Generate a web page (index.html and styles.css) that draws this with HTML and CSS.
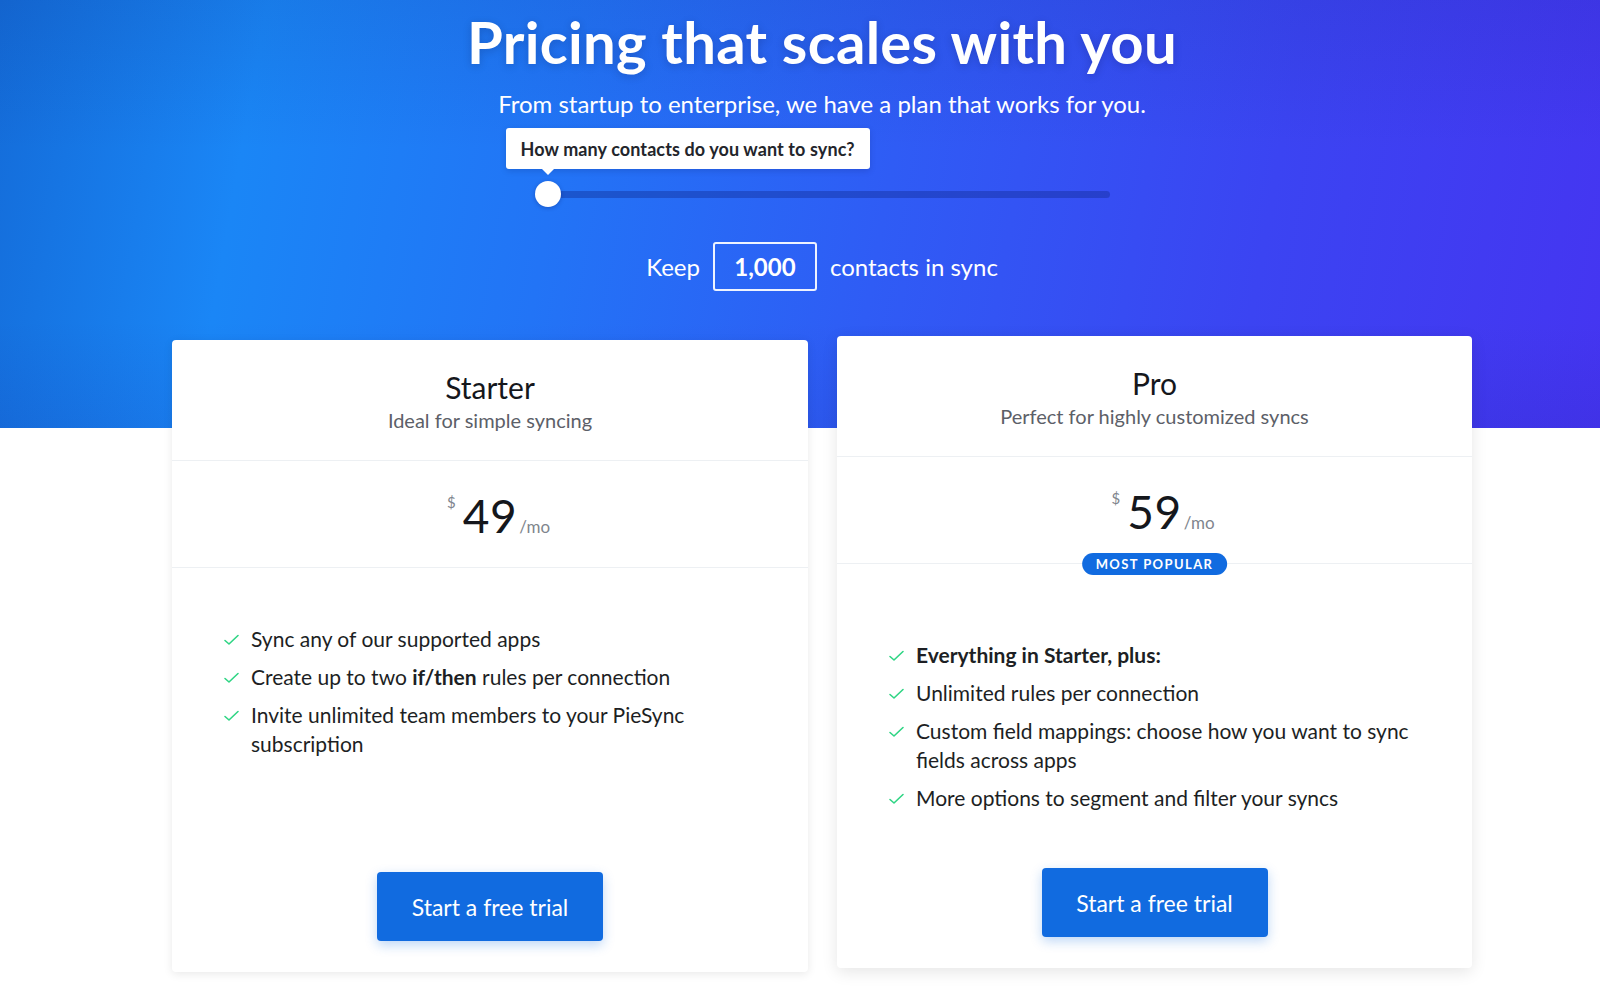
FILE: index.html
```html
<!DOCTYPE html>
<html lang="en">
<head>
<meta charset="utf-8">
<title>Pricing that scales with you</title>
<link rel="stylesheet" href="styles.css">
</head>
<body>
<section class="hero">
  <div class="container hero-inner">
    <h1 class="hero-title">Pricing that scales with you</h1>
    <p class="hero-sub">From startup to enterprise, we have a plan that works for you.</p>
    <div class="slider">
      <div class="track"></div>
      <div class="thumb">
        <div class="tooltip">How many contacts do you want to sync?</div>
      </div>
    </div>
    <div class="keep-row">
      <span>Keep</span>
      <span class="count-box">1,000</span>
      <span>contacts in sync</span>
    </div>
  </div>
</section>

<section class="container plans">
  <div class="card">
    <div class="card-head">
      <h2 class="plan-name">Starter</h2>
      <p class="plan-desc">Ideal for simple syncing</p>
    </div>
    <div class="card-price">
      <div class="price">
        <span class="currency">$</span>
        <span class="amount">49</span>
        <span class="period">/mo</span>
      </div>
    </div>
    <ul class="features">
      <li><svg class="check" viewBox="0 0 16 12"><polyline points="1.5,6.5 5.5,10 14.5,1.5"/></svg><span>Sync any of our supported apps</span></li>
      <li><svg class="check" viewBox="0 0 16 12"><polyline points="1.5,6.5 5.5,10 14.5,1.5"/></svg><span>Create up to two <b>if/then</b> rules per connection</span></li>
      <li><svg class="check" viewBox="0 0 16 12"><polyline points="1.5,6.5 5.5,10 14.5,1.5"/></svg><span>Invite unlimited team members to your PieSync subscription</span></li>
    </ul>
    <div class="card-foot">
      <a class="btn" href="#">Start a free trial</a>
    </div>
  </div>

  <div class="card card-pro">
    <div class="card-head">
      <h2 class="plan-name">Pro</h2>
      <p class="plan-desc">Perfect for highly customized syncs</p>
    </div>
    <div class="card-price">
      <div class="price">
        <span class="currency">$</span>
        <span class="amount">59</span>
        <span class="period">/mo</span>
      </div>
      <span class="badge">MOST POPULAR</span>
    </div>
    <ul class="features features-pro">
      <li><svg class="check" viewBox="0 0 16 12"><polyline points="1.5,6.5 5.5,10 14.5,1.5"/></svg><span><b>Everything in Starter, plus:</b></span></li>
      <li><svg class="check" viewBox="0 0 16 12"><polyline points="1.5,6.5 5.5,10 14.5,1.5"/></svg><span>Unlimited rules per connection</span></li>
      <li><svg class="check" viewBox="0 0 16 12"><polyline points="1.5,6.5 5.5,10 14.5,1.5"/></svg><span>Custom field mappings: choose how you want to sync fields across apps</span></li>
      <li><svg class="check" viewBox="0 0 16 12"><polyline points="1.5,6.5 5.5,10 14.5,1.5"/></svg><span>More options to segment and filter your syncs</span></li>
    </ul>
    <div class="card-foot">
      <a class="btn" href="#">Start a free trial</a>
    </div>
  </div>
</section>
</body>
</html>
```

FILE: styles.css
```css
* { box-sizing: border-box; }

html, body {
  margin: 0;
  padding: 0;
  background: #ffffff;
}

body {
  font-family: Lato, "Open Sans", "Liberation Sans", sans-serif;
  color: #1d1f24;
  -webkit-font-smoothing: antialiased;
}

.container {
  width: 1300px;
  margin-left: 172px;
}

/* HERO */
.hero {
  height: 428px;
  background:
    linear-gradient(180deg, rgba(10, 30, 110, 0.10) 0%, rgba(10, 30, 110, 0) 35%, rgba(10, 30, 110, 0) 75%, rgba(20, 20, 140, 0.10) 100%),
    linear-gradient(100deg, #146cd9 0%, #1a86f6 16%, #2274f6 35%, #2f5cf5 55%, #3b44f2 78%, #4535f1 100%);
  color: #fff;
  padding-top: 10px;
}

.hero-inner {
  display: flex;
  flex-direction: column;
  align-items: center;
}

.hero-title {
  margin: 0;
  font-size: 58px;
  line-height: 64px;
  font-weight: 700;
  letter-spacing: 0.3px;
  text-shadow: 0 2px 8px rgba(0, 0, 40, 0.18);
}

.hero-sub {
  margin: 15px 0 0;
  font-size: 24px;
  line-height: 30px;
  font-weight: 400;
}

.slider {
  position: relative;
  width: 575px;
  height: 26px;
  margin-top: 62px;
  display: flex;
  align-items: center;
}

.track {
  margin-left: 13px;
  flex: 1;
  height: 7px;
  border-radius: 4px;
  background: rgba(15, 40, 140, 0.38);
}

.thumb {
  position: absolute;
  left: 0;
  top: 0;
  width: 26px;
  height: 26px;
  border-radius: 50%;
  background: #fff;
  box-shadow: 0 1px 4px rgba(0, 0, 60, 0.25);
}

.tooltip {
  position: absolute;
  left: -29px;
  bottom: 38px;
  height: 41px;
  padding: 0 15px;
  display: flex;
  align-items: center;
  white-space: nowrap;
  background: #fff;
  color: #23252b;
  font-size: 18px;
  font-weight: 700;
  letter-spacing: 0.1px;
  border-radius: 3px;
  box-shadow: 0 2px 6px rgba(0, 0, 60, 0.15);
}

.tooltip::after {
  content: "";
  position: absolute;
  left: 36px;
  top: 100%;
  border-left: 6px solid transparent;
  border-right: 6px solid transparent;
  border-top: 6px solid #fff;
}

.keep-row {
  margin-top: 35px;
  display: flex;
  align-items: center;
  gap: 13px;
  font-size: 24px;
  line-height: 30px;
}

.count-box {
  width: 104px;
  height: 49px;
  border: 2px solid rgba(255, 255, 255, 0.92);
  border-radius: 3px;
  display: flex;
  align-items: center;
  justify-content: center;
  font-weight: 700;
  font-size: 24px;
}

/* PLANS */
.plans {
  margin-top: -88px;
  display: grid;
  grid-template-columns: 636px 635px;
  column-gap: 29px;
  align-items: start;
  padding-bottom: 21px;
}

.card {
  height: 632px;
  background: #fff;
  border-radius: 4px;
  box-shadow: 0 2px 10px rgba(0, 0, 0, 0.09);
  display: flex;
  flex-direction: column;
}

.card-pro {
  margin-top: -4px;
  box-shadow: 0 4px 16px rgba(0, 0, 0, 0.10);
}

.card-head {
  height: 121px;
  padding-top: 29px;
  text-align: center;
  border-bottom: 1px solid #edf0f3;
}

.plan-name {
  margin: 0;
  font-size: 30px;
  line-height: 36px;
  font-weight: 400;
  color: #15171c;
}

.plan-desc {
  margin: 2px 0 0;
  font-size: 20px;
  line-height: 26px;
  color: #5c6068;
}

.card-price {
  position: relative;
  height: 107px;
  padding-top: 4px;
  border-bottom: 1px solid #edf0f3;
  display: flex;
  align-items: center;
  justify-content: center;
}

.price {
  width: 100%;
  display: grid;
  grid-template-columns: 1fr auto 1fr;
  align-items: baseline;
  color: #15171c;
}

.currency {
  justify-self: end;
  align-self: start;
  font-size: 15px;
  line-height: 18px;
  color: #80858d;
  margin-right: 7px;
  margin-top: 1px;
}

.amount {
  font-size: 46px;
  line-height: 48px;
  font-weight: 400;
  letter-spacing: 0.5px;
}

.period {
  justify-self: start;
  font-size: 17px;
  color: #80858d;
  margin-left: 2px;
}

.badge {
  position: absolute;
  left: 50%;
  bottom: -12px;
  transform: translateX(-50%);
  height: 22px;
  padding: 0 14px;
  border-radius: 11px;
  background: #116be0;
  color: #fff;
  font-size: 13px;
  font-weight: 700;
  letter-spacing: 1.4px;
  display: flex;
  align-items: center;
  white-space: nowrap;
}

.features {
  list-style: none;
  margin: 0;
  padding: 56px 40px 0 51px;
  flex: 1;
}

.features-pro {
  padding-top: 76px;
}

.features li {
  display: flex;
  align-items: flex-start;
  font-size: 21px;
  line-height: 29px;
  color: #1d1f24;
  margin-bottom: 9px;
}

.features li b {
  font-weight: 700;
}

.check {
  flex: none;
  width: 17px;
  height: 12px;
  margin-top: 10px;
  margin-right: 11px;
  fill: none;
  stroke: #2fd584;
  stroke-width: 1.6;
  stroke-linecap: round;
  stroke-linejoin: round;
}

.card-foot {
  display: flex;
  justify-content: center;
  padding-bottom: 31px;
}

.btn {
  width: 226px;
  height: 69px;
  border-radius: 4px;
  background: #116be0;
  color: #fff;
  text-decoration: none;
  font-size: 23px;
  display: flex;
  align-items: center;
  justify-content: center;
  box-shadow: 0 4px 12px rgba(17, 107, 224, 0.28);
}
```
